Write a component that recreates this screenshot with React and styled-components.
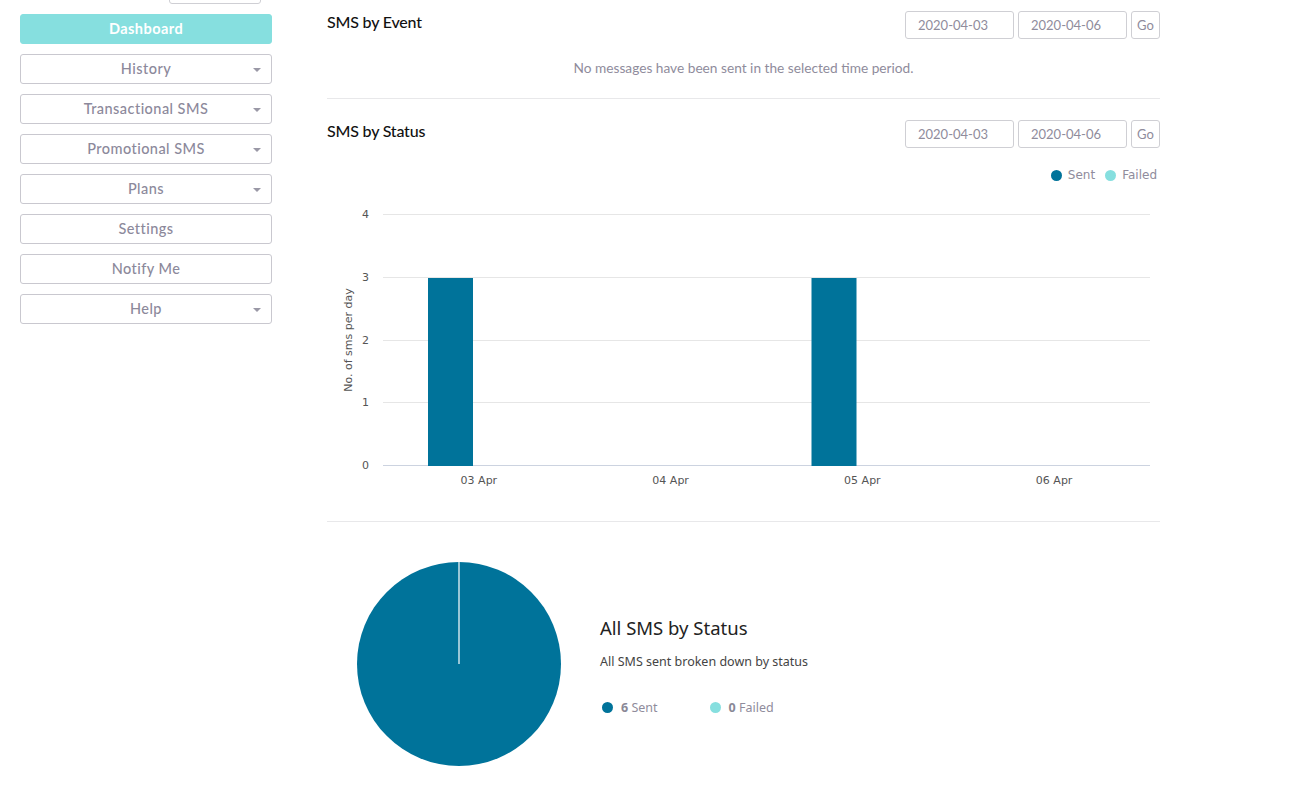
import React from 'react';
import styled, { createGlobalStyle } from 'styled-components';

const GlobalStyle = createGlobalStyle`
  body {
    margin: 0;
    background: #ffffff;
    font-family: Lato, "Open Sans", sans-serif;
  }
`;

const SENT = '#00739a';
const FAILED = '#86dfdf';

const Page = styled.div`
  display: flex;
  align-items: flex-start;
  width: 1310px;
`;

const Sidebar = styled.nav`
  display: flex;
  flex-direction: column;
  gap: 10px;
  width: 252px;
  padding-left: 20px;
  flex-shrink: 0;
`;

const TopBox = styled.div`
  align-self: flex-end;
  width: 92px;
  height: 30px;
  margin-top: -26px;
  margin-right: 11px;
  border: 1px solid #cfcfd4;
  border-radius: 3px;
  box-sizing: border-box;
`;

const NavButton = styled.button`
  position: relative;
  height: 30px;
  width: 100%;
  box-sizing: border-box;
  border: 1px solid ${(p) => (p.active ? '#86dfdf' : '#c9c8cf')};
  border-radius: 3px;
  background: ${(p) => (p.active ? '#86dfdf' : '#ffffff')};
  color: ${(p) => (p.active ? '#ffffff' : '#8c899b')};
  font-family: Lato, sans-serif;
  font-size: 14.5px;
  font-weight: ${(p) => (p.active ? 700 : 500)};
  letter-spacing: 0.45px;
  padding: 0 0 2px;
  cursor: pointer;
`;

const Caret = styled.span`
  position: absolute;
  right: 10px;
  top: 13px;
  width: 0;
  height: 0;
  border-left: 4px solid transparent;
  border-right: 4px solid transparent;
  border-top: 4px solid #9a98a6;
`;

const Main = styled.main`
  width: 833px;
  margin-left: 55px;
  padding-top: 11px;
`;

const Section = styled.section`
  border-bottom: ${(p) => (p.last ? 'none' : '1px solid #e8e8ea')};
  padding-top: ${(p) => p.top || 0}px;
  padding-bottom: ${(p) => p.bottom || 0}px;
`;

const HeaderRow = styled.div`
  display: flex;
  justify-content: space-between;
  align-items: flex-start;
`;

const Title = styled.h3`
  margin: 1px 0 0;
  font-family: Lato, sans-serif;
  font-size: 16px;
  font-weight: 500;
  color: #111;
  letter-spacing: -0.2px;
`;

const Dates = styled.div`
  display: flex;
  gap: 4px;
`;

const DateInput = styled.div`
  width: 109px;
  height: 28px;
  box-sizing: border-box;
  border: 1px solid #cfcfd4;
  border-radius: 3px;
  padding-left: 12px;
  display: flex;
  align-items: center;
  font-family: Lato, sans-serif;
  font-size: 13px;
  color: #8f8c9c;
`;

const GoButton = styled.button`
  width: 29px;
  height: 28px;
  box-sizing: border-box;
  border: 1px solid #cfcfd4;
  border-radius: 3px;
  background: #fff;
  color: #8f8c9c;
  font-family: Lato, sans-serif;
  font-size: 13px;
  padding: 0;
`;

const Empty = styled.p`
  margin: 20px 0 0;
  text-align: center;
  font-family: Lato, sans-serif;
  font-size: 13.7px;
  line-height: 18px;
  color: #8f8c9c;
`;

const Legend = styled.div`
  display: flex;
  justify-content: flex-end;
  gap: 10px;
  margin-top: 19px;
  padding-right: 3px;
  height: 16px;
`;

const LegendItem = styled.span`
  display: flex;
  align-items: center;
  gap: 6px;
  font-family: "DejaVu Sans", sans-serif;
  font-size: 12px;
  color: #8f8c9c;
`;

const Dot = styled.span`
  width: ${(p) => p.size || 11}px;
  height: ${(p) => p.size || 11}px;
  border-radius: 50%;
  background: ${(p) => p.color};
  display: inline-block;
`;

const ChartSvg = styled.svg`
  display: block;
  margin-top: 7px;
`;

const PieRow = styled.div`
  display: flex;
  align-items: center;
  gap: 38px;
  padding-left: 29px;
  padding-top: 39px;
`;

const PieInfo = styled.div`
  display: flex;
  flex-direction: column;
  padding-top: 2px;
`;

const PieTitle = styled.h2`
  margin: 0;
  font-family: "Noto Sans", "Open Sans", sans-serif;
  font-size: 18.5px;
  font-weight: 400;
  color: #222;
`;

const PieSub = styled.p`
  margin: 13px 0 0;
  font-family: "Noto Sans", sans-serif;
  font-size: 12.5px;
  color: #444;
`;

const PieLegend = styled.div`
  display: flex;
  gap: 52px;
  margin-top: 29px;
  padding-left: 2px;
`;

const PieLegendItem = styled.span`
  display: flex;
  align-items: center;
  gap: 8px;
  font-family: "Noto Sans", sans-serif;
  font-size: 12.5px;
  color: #8f8c9c;

  b {
    color: #8a8896;
    font-weight: 700;
  }
`;

const navItems = [
  { label: 'Dashboard', active: true },
  { label: 'History', caret: true },
  { label: 'Transactional SMS', caret: true },
  { label: 'Promotional SMS', caret: true },
  { label: 'Plans', caret: true },
  { label: 'Settings' },
  { label: 'Notify Me' },
  { label: 'Help', caret: true },
];

const DateRange = () => (
  <Dates>
    <DateInput>2020-04-03</DateInput>
    <DateInput>2020-04-06</DateInput>
    <GoButton>Go</GoButton>
  </Dates>
);

const yTicks = [0, 1, 2, 3, 4];
const days = ['03 Apr', '04 Apr', '05 Apr', '06 Apr'];
const sent = [3, 0, 3, 0];

function BarChart() {
  const zeroY = 275;
  const unit = 62.75;
  const left = 56;
  const right = 823;
  const band = (right - left) / 4;
  return (
    <ChartSvg width="833" height="310" viewBox="0 0 833 310">
      {yTicks.map((t) => {
        const y = Math.round(zeroY - t * unit) + 0.5;
        return (
          <g key={t}>
            <line
              x1={left}
              x2={right}
              y1={y}
              y2={y}
              stroke={t === 0 ? '#ccd3e0' : '#e6e6e6'}
              strokeWidth="1"
            />
            <text
              x="42"
              y={y + 3.5}
              textAnchor="end"
              fontFamily="DejaVu Sans, sans-serif"
              fontSize="11"
              fill="#555"
            >
              {t}
            </text>
          </g>
        );
      })}
      <text
        transform="translate(25 150) rotate(-90)"
        textAnchor="middle"
        fontFamily="DejaVu Sans, sans-serif"
        fontSize="11"
        fill="#555"
      >
        No. of sms per day
      </text>
      {sent.map((v, i) =>
        v > 0 ? (
          <rect
            key={i}
            x={left + i * band + 45}
            y={Math.round(zeroY - v * unit) + 1}
            width="45"
            height={zeroY - Math.round(zeroY - v * unit)}
            fill={SENT}
          />
        ) : null
      )}
      {days.map((d, i) => (
        <text
          key={d}
          x={left + i * band + band / 2}
          y="294"
          textAnchor="middle"
          fontFamily="DejaVu Sans, sans-serif"
          fontSize="11"
          fill="#555"
        >
          {d}
        </text>
      ))}
    </ChartSvg>
  );
}

export default function App() {
  return (
    <Page>
      <GlobalStyle />
      <Sidebar>
        <TopBox />
        {navItems.map((item) => (
          <NavButton key={item.label} active={item.active}>
            {item.label}
            {item.caret && <Caret />}
          </NavButton>
        ))}
      </Sidebar>
      <Main>
        <Section bottom={21}>
          <HeaderRow>
            <Title>SMS by Event</Title>
            <DateRange />
          </HeaderRow>
          <Empty>No messages have been sent in the selected time period.</Empty>
        </Section>
        <Section top={21} bottom={21}>
          <HeaderRow>
            <Title>SMS by Status</Title>
            <DateRange />
          </HeaderRow>
          <Legend>
            <LegendItem>
              <Dot color={SENT} />
              Sent
            </LegendItem>
            <LegendItem>
              <Dot color={FAILED} />
              Failed
            </LegendItem>
          </Legend>
          <BarChart />
        </Section>
        <Section last>
          <PieRow>
            <svg width="206" height="206" viewBox="0 0 206 206">
              <circle cx="103" cy="103" r="102" fill={SENT} />
              <line x1="103" y1="1" x2="103" y2="103" stroke="#fff" strokeWidth="1.2" />
            </svg>
            <PieInfo>
              <PieTitle>All SMS by Status</PieTitle>
              <PieSub>All SMS sent broken down by status</PieSub>
              <PieLegend>
                <PieLegendItem>
                  <Dot color={SENT} size={11} />
                  <span>
                    <b>6</b> Sent
                  </span>
                </PieLegendItem>
                <PieLegendItem>
                  <Dot color={FAILED} size={11} />
                  <span>
                    <b>0</b> Failed
                  </span>
                </PieLegendItem>
              </PieLegend>
            </PieInfo>
          </PieRow>
        </Section>
      </Main>
    </Page>
  );
}
